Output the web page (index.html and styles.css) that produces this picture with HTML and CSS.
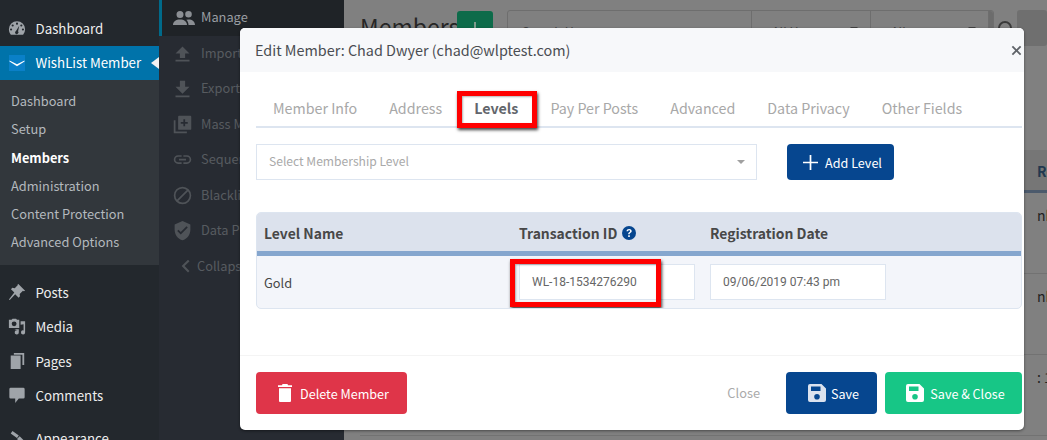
FILE: index.html
```html
<!DOCTYPE html>
<html lang="en">
<head>
<meta charset="utf-8">
<title>Edit Member</title>
<link rel="stylesheet" href="styles.css">
</head>
<body>
<div class="page">
  <aside class="wp-menu">
    <div class="wp-item"><svg class="wp-ic" viewBox="0 0 20 20"><path fill-rule="evenodd" d="M10 2.500a9 9 0 0 0-9 9c0 2.300.8 4.400 2.200 6h13.600a9 9 0 0 0 2.200-6 9 9 0 0 0-9-9zM10 4a1.200 1.200 0 1 1 0 2.400A1.200 1.200 0 0 1 10 4zM5.200 6a1.200 1.200 0 1 1 0 2.400 1.200 1.200 0 0 1 0-2.400zM3.400 10.500a1.200 1.200 0 1 1 0 2.400 1.200 1.200 0 0 1 0-2.400zM14.800 6a1.200 1.200 0 1 1 0 2.400 1.200 1.200 0 0 1 0-2.400zM16.600 10.500a1.200 1.200 0 1 1 0 2.400 1.200 1.200 0 0 1 0-2.400zM12.500 7.500l-1.300 6.200a1.900 1.900 0 1 1-2.300-.5z"/></svg><span>Dashboard</span></div>
    <div class="wp-item wp-current"><span class="wl-logo"><svg viewBox="0 0 16 16"><path d="M.5 5.500 8 9.300l7.500-3.800v1L8 11.300.5 6.500z"/></svg></span><span>WishList Member</span></div>
    <ul class="wp-sub">
      <li>Dashboard</li>
      <li>Setup</li>
      <li class="wp-sub-on">Members</li>
      <li>Administration</li>
      <li>Content Protection</li>
      <li>Advanced Options</li>
    </ul>
    <div class="wp-group">
      <div class="wp-item"><svg class="wp-ic" viewBox="0 0 20 20"><path d="M11.500 1l7.500 7.500-1.400.7-1-.7-3.600 3.600.3 2.700-1.500 1.500-3.800-3.800L2 19l-1-.6 6-7.800L3.300 6.900l1.500-1.500 2.700.3L11 2.100l-.4-.7z"/></svg><span>Posts</span></div>
      <div class="wp-item"><svg class="wp-ic" viewBox="0 0 20 20"><path fill-rule="evenodd" d="M1 2h3l1-1.200h4L10 2h2.500v9H1zM6.800 3.800a2.700 2.700 0 1 0 0 5.400 2.700 2.700 0 0 0 0-5.400zM14 3.500h5v12.500a2.300 2.300 0 1 1-1.700-2.200V7L14 7.500zM7 12.500h5v3.500a2.300 2.300 0 1 1-1.700-2.200v-.3z"/></svg><span>Media</span></div>
      <div class="wp-item"><svg class="wp-ic" viewBox="0 0 20 20"><path d="M6.500 1H18v13.500h-2V3H6.500zM3 4h11v15H3z"/></svg><span>Pages</span></div>
      <div class="wp-item"><svg class="wp-ic" viewBox="0 0 20 20"><path d="M3 2h14a1.500 1.500 0 0 1 1.500 1.500v9A1.500 1.500 0 0 1 17 14h-5l-4 5v-5H3a1.500 1.500 0 0 1-1.500-1.500v-9A1.500 1.500 0 0 1 3 2z"/></svg><span>Comments</span></div>
      <div class="wp-item wp-last"><svg class="wp-ic" viewBox="0 0 20 20"><path d="M5 1l7 5-2 3-7-5zM13 7l5 5-3 3-5-5zM3 17l6-6 1 1-6 6z"/></svg><span>Appearance</span></div>
    </div>
  </aside>

  <nav class="sub-nav">
    <div class="sub-row sub-on"><svg class="sub-ic" viewBox="0 0 24 24"><path d="M8 5a3.500 3.500 0 1 1 0 7 3.500 3.500 0 0 1 0-7zM16.500 5a3.300 3.300 0 1 1 0 6.600 3.300 3.300 0 0 1 0-6.600zM1 19c0-3.500 3-5.500 7-5.500s7 2 7 5.500zM16.500 19c0-2-.7-3.800-2.200-5.200l2.200-.3c3.800 0 6.500 2 6.500 5.500z"/></svg><span>Manage</span></div>
    <div class="sub-row"><svg class="sub-ic" viewBox="0 0 24 24"><path d="M12 4l8 8h-5v5H9v-5H4zM4 19h16v2H4z"/></svg><span>Import Members</span></div>
    <div class="sub-row"><svg class="sub-ic" viewBox="0 0 24 24"><path d="M9 3h6v7h5l-8 8-8-8h5zM4 20h16v2H4z"/></svg><span>Export Members</span></div>
    <div class="sub-row"><svg class="sub-ic" viewBox="0 0 24 24"><path fill-rule="evenodd" d="M2 7h2v13h13v2H2zM8 2h13a1 1 0 0 1 1 1v14a1 1 0 0 1-1 1H8a1 1 0 0 1-1-1V3a1 1 0 0 1 1-1zm5 4v3h-3v2h3v3h2v-3h3V9h-3V6z"/></svg><span>Mass Move</span></div>
    <div class="sub-row"><svg class="sub-ic" viewBox="0 0 24 24"><path d="M3.900 12A3.100 3.100 0 0 1 7 8.900h4V7H7a5 5 0 0 0 0 10h4v-1.900H7A3.100 3.100 0 0 1 3.900 12zM8 13h8v-2H8zM17 7h-4v1.900h4a3.100 3.100 0 0 1 0 6.200h-4V17h4a5 5 0 0 0 0-10z"/></svg><span>Sequential</span></div>
    <div class="sub-row"><svg class="sub-ic" viewBox="0 0 24 24"><path fill-rule="evenodd" d="M12 2a10 10 0 1 0 0 20 10 10 0 0 0 0-20zM4 12a8 8 0 0 1 12.900-6.300L5.700 16.900A8 8 0 0 1 4 12zm8 8a8 8 0 0 1-4.900-1.700L18.300 7.100A8 8 0 0 1 12 20z"/></svg><span>Blacklist</span></div>
    <div class="sub-row"><svg class="sub-ic" viewBox="0 0 24 24"><path fill-rule="evenodd" d="M12 1l9 4v6c0 5.500-3.800 10.700-9 12-5.200-1.300-9-6.500-9-12V5zm-2 15.500l8-8-1.400-1.400L10 13.700l-2.600-2.600L6 12.500z"/></svg><span>Data Privacy</span></div>
    <div class="sub-row sub-collapse"><svg class="sub-ic chev" viewBox="0 0 24 24"><path d="M16 3.500l2 2L11.500 12l6.500 6.500-2 2L7.500 12z"/></svg><span>Collapse</span></div>
  </nav>

  <main class="bg-main">
    <div class="bg-head">
      <h1>Members</h1>
      <span class="bg-add"></span>
      <div class="bg-search">
        <span class="bg-field bg-f1">Search Users</span>
        <span class="bg-field bg-f2 bg-drop">All Users</span>
        <span class="bg-field bg-f3 bg-drop">All</span>
        <span class="bg-go"><i class="bg-lens"></i></span>
      </div>
      <span class="bg-next"></span>
    </div>
    <div class="bg-thead"><span>Registered</span></div>
    <div class="bg-row"><span>nb</span></div>
    <div class="bg-row"><span>nb</span></div>
    <div class="bg-row"><span>: 1</span></div>
  </main>

  <section class="modal">
    <header class="modal-head">
      <h2>Edit Member: Chad Dwyer (chad@wlptest.com)</h2>
      <svg class="modal-x" viewBox="0 0 12 12"><path d="M2.200 0.800 6 4.600 9.800 0.800 11.200 2.200 7.400 6 11.200 9.800 9.800 11.200 6 7.400 2.200 11.200 0.800 9.800 4.600 6 0.800 2.200z"/></svg>
    </header>
    <div class="modal-body">
      <div class="tabs">
        <span class="tab">Member Info</span>
        <span class="tab">Address</span>
        <span class="tab tab-on">Levels<i class="mark mark-tab"></i></span>
        <span class="tab">Pay Per Posts</span>
        <span class="tab">Advanced</span>
        <span class="tab">Data Privacy</span>
        <span class="tab">Other Fields</span>
      </div>
      <div class="add-row">
        <div class="select"><span>Select Membership Level</span><i class="caret"></i></div>
        <button class="btn btn-blue btn-add" type="button"><svg class="ic-plus" viewBox="0 0 14 14"><path d="M6.200 0h1.600v6.200H14v1.600H7.800V14H6.200V7.800H0V6.200h6.200z"/></svg>Add Level</button>
      </div>
      <div class="table">
        <div class="t-head">
          <span>Level Name</span>
          <span class="t-help">Transaction ID <svg class="ic-help" viewBox="0 0 14 14"><circle cx="7" cy="7" r="7"/><path class="q" d="M4.500 5.300C4.600 3.800 5.700 3 7.100 3c1.500 0 2.600.9 2.600 2.100 0 1-.6 1.500-1.300 2-.6.400-.7.600-.7 1.200H6.200c0-1 .2-1.500 1-2 .6-.4.900-.7.900-1.100 0-.5-.4-.9-1-.9s-1 .4-1.100 1zM6.200 9.300h1.600v1.600H6.200z"/></svg></span>
          <span>Registration Date</span>
        </div>
        <div class="t-row">
          <span class="t-name">Gold</span>
          <div class="input">WL-18-1534276290<i class="mark mark-input"></i></div>
          <div class="input">09/06/2019 07:43 pm</div>
        </div>
      </div>
    </div>
    <footer class="modal-foot">
      <button class="btn btn-red" type="button"><svg class="ic-trash" viewBox="0 0 14 18"><path d="M4.500 0h5l.5 1.300h4V3H0V1.300h4zM1 4.200h12V17a1 1 0 0 1-1 1H2a1 1 0 0 1-1-1z"/></svg>Delete Member</button>
      <span class="foot-close">Close</span>
      <button class="btn btn-blue btn-save" type="button"><svg class="ic-save light" viewBox="0 0 18 18"><path fill-rule="evenodd" d="M2 0h11.500L18 4.500V16a2 2 0 0 1-2 2H2a2 2 0 0 1-2-2V2a2 2 0 0 1 2-2zm1 2.500V7h9.500V2.500zM9 10a2.800 2.800 0 1 0 0 5.600A2.800 2.800 0 0 0 9 10z"/></svg>Save</button>
      <button class="btn btn-green" type="button"><svg class="ic-save" viewBox="0 0 18 18"><path fill-rule="evenodd" d="M2 0h11.500L18 4.500V16a2 2 0 0 1-2 2H2a2 2 0 0 1-2-2V2a2 2 0 0 1 2-2zm1 2.500V7h9.500V2.500zM9 10a2.800 2.800 0 1 0 0 5.600A2.800 2.800 0 0 0 9 10z"/></svg>Save &amp; Close</button>
    </footer>
  </section>
</div>
</body>
</html>
```
FILE: styles.css
```css
* { box-sizing: border-box; }
html, body { margin: 0; height: 100%; }
body {
  font-family: "Noto Sans CJK SC", "Noto Sans CJK JP", "Noto Sans", sans-serif;
  background: #808080;
  overflow: hidden;
}
.page {
  position: relative;
  display: flex;
  width: 1047px;
  height: 440px;
  overflow: hidden;
}

/* WordPress menu */
.wp-menu {
  flex: 0 0 159px;
  background: #23282d;
  padding-top: 12px;
  color: #eee;
  font-size: 13.300px;
}
.wp-item {
  display: flex;
  align-items: center;
  height: 34.300px;
  padding-left: 35.500px;
  padding-bottom: 2px;
  position: relative;
}
.wp-ic {
  position: absolute;
  left: 8px;
  top: 7px;
  width: 18px;
  height: 18px;
  fill: #9fa4a9;
}
.wp-current {
  background: #0073aa;
  color: #fff;
  height: 34px;
}
.wp-current::after {
  content: "";
  position: absolute;
  right: 0;
  top: 11px;
  border: 6px solid transparent;
  border-right: 8px solid #f1f1f1;
  border-left: 0;
}
.wl-logo {
  position: absolute;
  left: 9px;
  top: 9px;
  width: 16px;
  height: 16px;
  background: #0a80c8;
}
.wl-logo svg { display: block; fill: #fff; }
.wp-sub {
  list-style: none;
  margin: 0;
  padding: 8px 0;
  background: #32373c;
  color: #b4b9be;
  font-size: 12.800px;
}
.wp-sub li {
  height: 28.200px;
  line-height: 25px;
  padding-left: 11px;
}
.wp-sub .wp-sub-on { color: #fff; font-weight: 600; }
.wp-group { margin-top: 11px; }
.wp-last { margin-top: 9px; }

/* Plugin side nav */
.sub-nav {
  flex: 0 0 185px;
  background: #272b32;
  color: #575b60;
  font-size: 12.800px;
}
.sub-row {
  display: flex;
  align-items: center;
  gap: 8px;
  height: 35.500px;
  padding-left: 13px;
  white-space: nowrap;
}
.sub-row span { padding-bottom: 2px; }
.sub-ic { width: 21px; height: 21px; fill: #4f5358; flex: none; }
.sub-on {
  background: #1f2327;
  border-left: 3px solid #006a8a;
  padding-left: 10px;
  gap: 5px;
  color: #9a9ea3;
}
.sub-on .sub-ic { width: 24px; height: 24px; fill: #8b8f94; }
.sub-collapse { padding-left: 17px; gap: 3px; }
.chev { width: 18px; height: 18px; }

/* Dimmed page behind the dialog */
.bg-main {
  flex: 1;
  min-width: 0;
  padding: 10px 0 0 16px;
  background: #808080;
  color: #2c2c2c;
}
.bg-head { display: flex; height: 36px; align-items: flex-start; }
.bg-head h1 {
  margin: 0;
  font-size: 23px;
  font-weight: 400;
  line-height: 32px;
  color: #262626;
  width: 97px;
}
.bg-add {
  position: relative;
  flex: 0 0 36px;
  height: 36px;
  margin-top: 1px;
  border-radius: 3px;
  background: #0d6b4a;
}
.bg-add::after {
  content: "";
  position: absolute;
  left: 17px;
  top: 11px;
  width: 2px;
  height: 16px;
  background: #7f9a8c;
}
.bg-search {
  display: flex;
  margin-left: 14px;
  width: 511px;
  height: 36px;
  border: 1px solid #6e6e6e;
  border-radius: 3px;
  font-size: 12.500px;
  color: #444;
}
.bg-field {
  position: relative;
  line-height: 42px;
  padding-left: 14px;
  border-right: 1px solid #6e6e6e;
}
.bg-f1 { width: 244px; }
.bg-f2 { width: 119px; padding-left: 20px; }
.bg-f3 { width: 118px; padding-left: 20px; }
.bg-drop::after {
  content: "";
  position: absolute;
  right: 12px;
  top: 16px;
  border: 4px solid transparent;
  border-top-color: #444;
}
.bg-go { position: relative; flex: 1; background: #6c6c6c; border-radius: 0 3px 3px 0; }
.bg-lens {
  position: absolute;
  left: 9px;
  top: 10px;
  width: 14px;
  height: 14px;
  border: 2px solid #3a3a3a;
  border-radius: 50%;
}
.bg-next {
  flex: none;
  width: 30px;
  height: 36px;
  margin-left: 23px;
  border-radius: 3px;
  background: #6f6f6f;
}
.bg-thead {
  height: 43px;
  margin-top: 104px;
  padding-left: 677px;
  border-bottom: 3px solid #4c5a6c;
  background: #767676;
  color: #22384f;
  font-size: 14px;
  font-weight: 600;
  line-height: 42px;
  white-space: nowrap;
}
.bg-row {
  height: 81px;
  padding-left: 677px;
  border-bottom: 1px solid #727272;
  font-size: 14px;
  line-height: 45px;
  white-space: nowrap;
  color: #222;
}

/* Dialog */
.modal {
  position: absolute;
  left: 240px;
  top: 28px;
  width: 784px;
  height: 402px;
  display: flex;
  flex-direction: column;
  background: #fff;
  border-radius: 5px;
  box-shadow: 0 1px 3px rgba(0, 0, 0, .45);
  color: #444;
}
.modal-head {
  flex: 0 0 44px;
  display: flex;
  align-items: center;
  justify-content: space-between;
  padding: 0 2px 2px 15px;
  background: #f7f8fa;
  border-radius: 5px 5px 0 0;
}
.modal-head h2 { margin: 0; font-size: 14.400px; font-weight: 400; color: #4a4d52; }
.modal-x { width: 11px; height: 11px; fill: #5f6368; margin-top: 2px; }
.modal-body { flex: 1; padding: 19px 2px 0 16px; }
.tabs {
  display: flex;
  height: 37px;
  padding-left: 17px;
  gap: 32px;
  border-bottom: 2px solid #dde5f0;
  font-size: 14.280px;
  color: #a8a8a8;
  line-height: 33px;
}
.tab { position: relative; white-space: nowrap; }
.tab-on { color: #62666c; font-weight: 600; }
.mark {
  position: absolute;
  border: 5px solid #f00;
  box-shadow: 1px 2px 3px rgba(0, 0, 0, .75), inset 1px 1px 2px rgba(0, 0, 0, .3);
  pointer-events: none;
}
.mark-tab { left: -17px; right: -19px; top: 0; height: 37px; }
.mark-input { left: -10px; top: -6px; width: 151px; height: 48px; }
.add-row {
  display: flex;
  align-items: flex-start;
  margin-top: 16px;
  gap: 30px;
}
.select {
  position: relative;
  width: 501px;
  height: 36px;
  padding-left: 12px;
  border: 1px solid #dde5f0;
  font-size: 12.100px;
  line-height: 32px;
  color: #a9a9a9;
}
.caret {
  position: absolute;
  right: 11px;
  top: 15px;
  border: 4px solid transparent;
  border-top: 4px solid #a0a0a0;
}
.btn {
  display: flex;
  align-items: center;
  justify-content: center;
  border: 0;
  border-radius: 4px;
  padding: 0 0 0 4px;
  font: inherit;
  font-size: 12.600px;
  color: #fff;
  white-space: nowrap;
}
.btn-blue { background: #06468f; }
.btn-add { width: 107px; height: 36px; gap: 7px; }
.ic-plus { width: 15px; height: 15px; fill: #fff; }
.table {
  margin-top: 32px;
  width: 766px;
  border: 1px solid #dde5f0;
  border-radius: 5px;
  overflow: hidden;
  background: #f3f5fa;
}
.t-head, .t-row {
  display: grid;
  grid-template-columns: 255px 191px 1fr;
  padding-left: 7px;
}
.t-head {
  height: 43px;
  align-items: center;
  background: #dce2ed;
  border-bottom: 5px solid #85a6ce;
  padding-top: 1px;
  font-size: 13.900px;
  font-weight: 600;
  color: #484848;
}
.t-help { display: flex; align-items: center; gap: 5px; }
.ic-help { width: 14px; height: 14px; fill: #06468f; }
.ic-help .q { fill: #fff; }
.t-row { height: 52px; align-items: center; }
.t-name { font-size: 12.800px; color: #484848; }
.input {
  position: relative;
  width: 176px;
  height: 36px;
  padding-left: 12px;
  border: 1px solid #dde5f0;
  background: #fff;
  font-family: Roboto, "Liberation Sans", sans-serif;
  font-size: 12px;
  line-height: 34px;
  color: #666;
}
.modal-foot {
  flex: 0 0 75px;
  display: flex;
  align-items: flex-start;
  padding: 16px 2px 0 16px;
  border-top: 1px solid #f4f4f4;
}
.btn-red { width: 151px; height: 42px; gap: 8px; background: #df3549; }
.ic-trash { width: 14px; height: 18px; fill: #fff; }
.foot-close {
  margin-left: auto;
  margin-right: 26px;
  line-height: 42px;
  font-size: 12.800px;
  color: #aaa;
}
.btn-save { width: 91px; height: 42px; gap: 5px; margin-right: 8px; }
.ic-save { width: 18px; height: 18px; fill: #fff; }
.ic-save.light { fill: #dbe2ee; }
.btn-green { width: 137px; height: 42px; gap: 6px; background: #17c686; }
```
